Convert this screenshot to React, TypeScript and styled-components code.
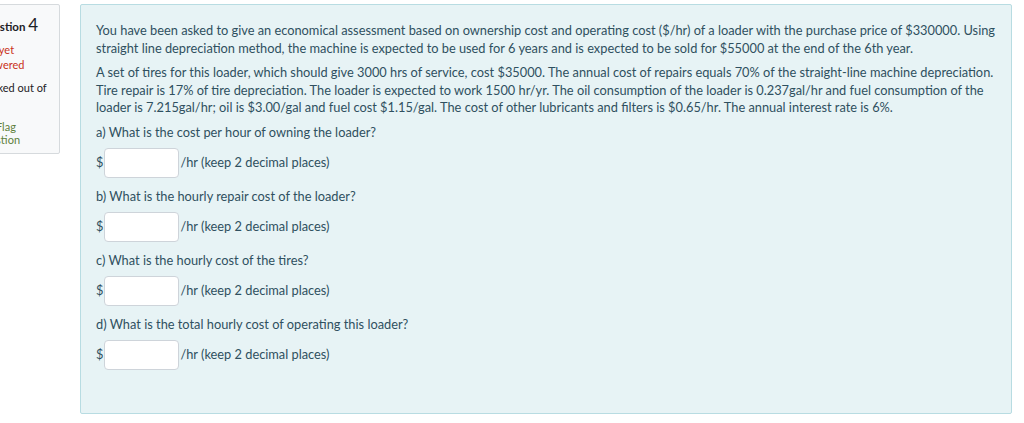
import styled, { createGlobalStyle } from 'styled-components';

const GlobalStyle = createGlobalStyle`
    html, body {
        margin: 0;
        padding: 0;
        background: #fff;
        overflow: hidden;
    }
    * { box-sizing: border-box; }
`;

function App(){
    const questions = [
        'a) What is the cost per hour of owning the loader?',
        'b) What is the hourly repair cost of the loader?',
        'c) What is the hourly cost of the tires?',
        'd) What is the total hourly cost of operating this loader?',
    ];

    return(
        <Page>
            <GlobalStyle />
            <Info>
                <QNumber>Question <span>4</span></QNumber>
                <State>Not yet answered</State>
                <Grade>Marked out of</Grade>
                <Flag>
                    <svg width="12" height="12" viewBox="0 0 12 12">
                        <path d="M2 1v10M2 1h7l-2 2.5L9 6H2" fill="none" stroke="#5e7f3a" strokeWidth="1.2" />
                    </svg>
                    Flag question
                </Flag>
            </Info>
            <Formulation>
                <Para $mb={7}>
                    You have been asked to give an economical assessment based on ownership cost and operating cost ($/hr) of a loader with the purchase price of $330000. Using straight line depreciation method, the machine is expected to be used for 6 years and is expected to be sold for $55000 at the end of the 6th year.
                </Para>
                <Para $mb={7}>
                    A set of tires for this loader, which should give 3000 hrs of service, cost $35000. The annual cost of repairs equals 70% of the straight-line machine depreciation. Tire repair is 17% of tire depreciation. The loader is expected to work 1500 hr/yr. The oil consumption of the loader is 0.237gal/hr and fuel consumption of the loader is 7.215gal/hr; oil is $3.00/gal and fuel cost $1.15/gal. The cost of other lubricants and filters is $0.65/hr. The annual interest rate is 6%.
                </Para>
                {questions.map((q) => (
                    <div key={q}>
                        <Para $mb={7}>{q}</Para>
                        <AnswerRow>
                            <span>$</span>
                            <AnswerInput type="text" />
                            <span>/hr (keep 2 decimal places)</span>
                        </AnswerRow>
                    </div>
                ))}
            </Formulation>
        </Page>
    )
}

const Page = styled.div`
    display: flex;
    align-items: flex-start;
    padding: 4px 12px 0 0;
    font-family: Lato, "Open Sans", sans-serif;
`;

const Info = styled.div`
    flex: 0 0 90px;
    margin-left: -30px;
    height: 150px;
    padding: 8px 7px;
    background-color: #f8f9fa;
    border: 1px solid #d6dadd;
    border-radius: 2px;
    font-size: 11px;
    color: #1d2125;
`;

const QNumber = styled.div`
    font-weight: bold;
    font-size: 11.5px;
    margin: 1px 0 7px;

    span{
        font-size: 17px;
        font-weight: normal;
    }
`;

const State = styled.div`
    color: #ca3120;
    line-height: 15px;
    margin-bottom: 8px;
`;

const Grade = styled.div`
    line-height: 15px;
    margin-bottom: 25px;
`;

const Flag = styled.div`
    color: #5e7f3a;
    line-height: 13px;

    svg{
        margin-right: 6px;
        vertical-align: -1px;
    }
`;

const Formulation = styled.div`
    flex: 1;
    margin-left: 20px;
    min-height: 410px;
    padding: 17px 15px 16px;
    background-color: #e7f3f5;
    border: 1px solid #b8dce2;
    border-radius: 2px;
    color: #2f5060;
    font-size: 12.8px;
    line-height: 17.5px;
`;

const Para = styled.p<{ $mb: number }>`
    margin: 0 0 ${(p) => p.$mb}px;
`;

const AnswerRow = styled.div`
    display: flex;
    align-items: center;
    height: 30px;
    margin-bottom: 9.5px;
`;

const AnswerInput = styled.input`
    width: 75px;
    height: 30px;
    margin: 0 1px 0 1px;
    border: 1px solid #ced4da;
    border-radius: 4px;
    background: #fff;
    outline: none;
`;

export default App;
